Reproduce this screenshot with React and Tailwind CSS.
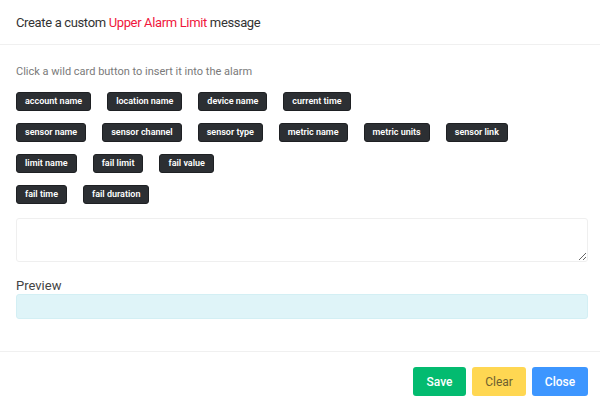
import React from "react";

const rows = [
  ["account name", "location name", "device name", "current time"],
  ["sensor name", "sensor channel", "sensor type", "metric name", "metric units", "sensor link"],
  ["limit name", "fail limit", "fail value"],
  ["fail time", "fail duration"],
];

const App = () => {
  return (
    <div className="w-[600px] h-[410px] bg-white flex flex-col font-['Roboto',sans-serif] text-[#333]">
      <div className="h-[45px] px-4 flex items-center border-b border-[#f0f0f0]">
        <h5 className="text-[13px] leading-none tracking-[-0.35px]">
          Create a custom <span className="text-[#f0163c]">Upper Alarm Limit</span> message
        </h5>
      </div>

      <div className="pl-4 pr-3 pt-[21px] flex-1">
        <p className="text-[11px] leading-none text-[#7a7a7a] mb-[15px]">
          Click a wild card button to insert it into the alarm
        </p>

        {rows.map((row, i) => (
          <div key={i} className="flex gap-4 mb-3">
            {row.map((label) => (
              <button
                key={label}
                className="h-[19px] px-2 rounded-[3px] bg-[#2c2f33] border border-[#1e2023] text-white text-[9px] font-semibold leading-none"
              >
                {label}
              </button>
            ))}
          </div>
        ))}

        <textarea className="block w-full h-[44px] mt-[14px] border border-[#efefef] rounded-[3px] resize-y" />

        <div className="mt-[17px] text-[13px] leading-none text-[#444]">Preview</div>
        <div className="mt-[2px] h-[25px] rounded-[3px] bg-[#dff4f8] border border-[#d3eff4]" />
      </div>

      <div className="h-[59px] border-t border-[#f0f0f0] px-3 pt-[15px] flex justify-end gap-[6px]">
        <button className="h-[29px] w-[53px] rounded-[3px] bg-[#03bb70] text-white text-[12px] font-medium">
          Save
        </button>
        <button className="h-[29px] w-[54px] rounded-[3px] bg-[#ffd752] text-[#6e6030] text-[12px]">
          Clear
        </button>
        <button className="h-[29px] w-[56px] rounded-[3px] bg-[#3d96ff] text-white text-[12px] font-medium">
          Close
        </button>
      </div>
    </div>
  );
};

export default App;
